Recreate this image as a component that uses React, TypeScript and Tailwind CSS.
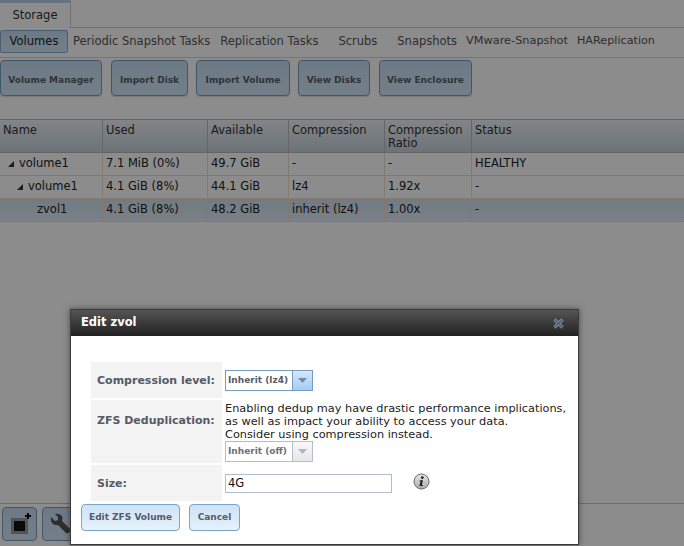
import React from "react";

const font = { fontFamily: '"DejaVu Sans", sans-serif' };

function ActionButton({ label, w, ml }: { label: string; w: string; ml: string }) {
  return (
    <div className={`h-[36px] ${w} ${ml} flex items-center justify-center rounded-[4px] border border-[#769dc0] bg-gradient-to-b from-[#c6def3] to-[#d2e6f8] pt-[5px] text-[9px] font-bold text-[#565f69] shadow-[0_1px_1px_rgba(0,0,0,0.15)]`}>
      {label}
    </div>
  );
}

const cols = ["w-[103px]", "w-[105px]", "w-[81px]", "w-[96px]", "w-[87px]", "flex-1"];

function Row({ cells, selected }: { cells: React.ReactNode[]; selected?: boolean }) {
  return (
    <div className={`flex h-[23px] border-b border-[#f1dcc8] ${selected ? "bg-gradient-to-b from-[#cfe0ef] to-[#dfeaf4]" : "bg-white"}`}>
      {cells.map((c, i) => (
        <div key={i} className={`${cols[i]} flex items-center border-r border-[#f1dcc8] pl-[3px] text-[11.5px] text-[#222] last:border-r-0`}>
          {c}
        </div>
      ))}
    </div>
  );
}

function Tri() {
  return (
    <svg width="6" height="6" viewBox="0 0 6 6" className="mr-[5px] shrink-0">
      <path d="M6 0V6H0Z" fill="#333" />
    </svg>
  );
}

function FormLabel({ children, className }: { children: React.ReactNode; className: string }) {
  return (
    <div className={`${className} w-[131px] shrink-0 flex bg-[#f3f3f3] pl-[6px] text-[11px] font-bold text-[#555a66]`}>
      {children}
    </div>
  );
}

function SelectBox({ label, active }: { label: string; active?: boolean }) {
  const border = active ? "border-[#769dc0]" : "border-[#b3bccb]";
  return (
    <div className={`flex h-[21px] w-[88px] border bg-white ${border}`}>
      <div className={`flex w-[66px] items-center whitespace-nowrap pl-[2px] text-[9px] font-bold ${active ? "text-[#555a66]" : "text-[#6a6f7a]"}`}>{label}</div>
      <div className={`flex flex-1 items-center justify-center border-l ${border} ${active ? "bg-gradient-to-b from-[#d5e7f8] to-[#a4ccf4]" : "bg-gradient-to-b from-[#f8f8f8] to-[#e6e6e6]"}`}>
        <svg width="9" height="5" viewBox="0 0 9 5"><path d="M0 0H9L4.5 5Z" fill={active ? "#6e8aa8" : "#a9b6c8"} /></svg>
      </div>
    </div>
  );
}

function FooterBtn({ children }: { children: React.ReactNode }) {
  return (
    <div className="flex h-[34px] w-[35px] items-center justify-center rounded-[4px] border border-[#769dc0] bg-gradient-to-b from-[#c6def3] to-[#d2e6f8]">
      {children}
    </div>
  );
}

export default function App() {
  return (
    <div className="relative h-[546px] w-[684px] overflow-hidden bg-white" style={font}>
      {/* Top tab */}
      <div className="flex h-[28px] border-b border-[#cfcfcf]">
        <div className="flex h-[28px] w-[71px] items-center justify-center border-r border-t-[3px] border-r-[#cfcfcf] border-t-[#b9d3ea] bg-white pt-[1px] text-[11.5px] text-[#333]">
          Storage
        </div>
      </div>

      {/* Sub tabs */}
      <div className="flex h-[30px] items-start border-b border-[#d6d6d6] pt-[2px] text-[11.5px] text-[#555]">
        <div className="flex h-[23px] w-[68px] items-center justify-center rounded-[2px] border border-[#86abcd] bg-gradient-to-b from-[#c6def3] to-[#d2e6f8] text-[#222]">
          Volumes
        </div>
        <div className="flex h-[23px] items-center">
          <span className="ml-[5px]">Periodic Snapshot Tasks</span>
          <span className="ml-[10px]">Replication Tasks</span>
          <span className="ml-[20px]">Scrubs</span>
          <span className="ml-[20px]">Snapshots</span>
          <span className="ml-[9px] text-[11.3px]">VMware-Snapshot</span>
          <span className="ml-[9px] text-[11.2px]">HAReplication</span>
        </div>
      </div>

      {/* Actions */}
      <div className="flex pt-[2px]">
        <ActionButton label="Volume Manager" w="w-[102px]" ml="ml-0" />
        <ActionButton label="Import Disk" w="w-[77px]" ml="ml-[9px]" />
        <ActionButton label="Import Volume" w="w-[94px]" ml="ml-[8px]" />
        <ActionButton label="View Disks" w="w-[72px]" ml="ml-[8px]" />
        <ActionButton label="View Enclosure" w="w-[93px]" ml="ml-[9px]" />
      </div>

      {/* Table */}
      <div className="mt-[23px]">
        <div className="flex h-[34px] border-y border-[#b5b5b5] bg-gradient-to-b from-[#eef3f7] to-[#c6d2dc] text-[11.5px] leading-[13px] text-[#333]">
          {["Name", "Used", "Available", "Compression", "Compression Ratio", "Status"].map((h, i) => (
            <div key={h} className={`${cols[i]} border-r border-[#b5bcc4] pl-[3px] pt-[4px] last:border-r-0`}>
              {h}
            </div>
          ))}
        </div>
        <Row cells={[<span className="flex items-center pl-[5px]"><Tri />volume1</span>, "7.1 MiB (0%)", "49.7 GiB", "-", "-", "HEALTHY"]} />
        <Row cells={[<span className="flex items-center pl-[14px]"><Tri />volume1</span>, "4.1 GiB (8%)", "44.1 GiB", "lz4", "1.92x", "-"]} />
        <Row selected cells={[<span className="pl-[34px]">zvol1</span>, "4.1 GiB (8%)", "48.2 GiB", "inherit (lz4)", "1.00x", "-"]} />
      </div>

      {/* Footer */}
      <div className="absolute bottom-0 left-0 right-0 flex h-[43px] gap-[5px] border-t border-[#c4c4c4] pl-[2px] pt-[3px]">
        <FooterBtn>
          <svg width="24" height="24" viewBox="0 0 24 24">
            <rect x="3" y="6" width="17" height="16" fill="#9a9a9a" />
            <rect x="6" y="9" width="11" height="10" fill="#111" />
            <path d="M19 1h2v2h2v2h-2v2h-2V5h-2V3h2Z" fill="#111" />
          </svg>
        </FooterBtn>
        <FooterBtn>
          <svg width="22" height="22" viewBox="0 0 22 22">
            <path d="M2 4l4 4 3-1 0-3-3-3c5-1 9 2 7 7l8 8c1 3-2 5-4 4L9 12C4 13 1 9 2 4Z" fill="#555" />
          </svg>
        </FooterBtn>
      </div>

      {/* Underlay */}
      <div className="absolute inset-0 bg-black/45" />

      {/* Dialog */}
      <div className="absolute left-[70px] top-[309px] h-[236px] w-[509px] border border-[#3a3a3a] bg-white shadow-[0_0_6px_rgba(0,0,0,0.5)]">
        <div className="flex h-[26px] items-center justify-between bg-gradient-to-b from-[#555] to-[#222] pl-[10px] pr-[14px] text-[11.5px] font-bold text-white">
          <span>Edit zvol</span>
          <svg width="11" height="11" viewBox="0 0 11 11">
            <path d="M1.5 1.5L9.5 9.5M9.5 1.5L1.5 9.5" stroke="#8a8f96" strokeWidth="3.2" />
            <path d="M1.5 1.5L9.5 9.5M9.5 1.5L1.5 9.5" stroke="#4a6076" strokeWidth="1.6" />
          </svg>
        </div>

        <div className="ml-[20px] mt-[26px] flex flex-col gap-[2px]">
          <div className="flex">
            <FormLabel className="h-[36px] items-center pt-[3px]">Compression level:</FormLabel>
            <div className="ml-[3px] flex items-center pt-[1px]">
              <SelectBox label="Inherit (lz4)" active />
            </div>
          </div>

          <div className="flex">
            <FormLabel className="h-[63px] items-start pt-[13px]">ZFS Deduplication:</FormLabel>
            <div className="ml-[3px] flex flex-col pt-[2px]">
              <div className="whitespace-nowrap text-[11.3px] leading-[13px] text-[#222]">
                Enabling dedup may have drastic performance implications,
                <br />
                as well as impact your ability to access your data.
                <br />
                Consider using compression instead.
              </div>
              <div>
                <SelectBox label="Inherit (off)" />
              </div>
            </div>
          </div>

          <div className="flex">
            <FormLabel className="h-[36px] items-center pt-[3px]">Size:</FormLabel>
            <div className="ml-[3px] flex h-[36px] items-center pt-[1px]">
              <div className="flex h-[19px] w-[167px] items-center border border-[#b3bccb] bg-white pl-[2px] text-[11.5px] text-[#111]">4G</div>
              <svg width="17" height="17" viewBox="0 0 17 17" className="ml-[21px] -mt-[5px]">
                <defs>
                  <linearGradient id="g" x1="0" y1="0" x2="0" y2="1">
                    <stop offset="0" stopColor="#e8e8e8" />
                    <stop offset="1" stopColor="#a9a9a9" />
                  </linearGradient>
                </defs>
                <circle cx="8.5" cy="8.5" r="7.5" fill="url(#g)" stroke="#666" />
                <circle cx="9.3" cy="4.6" r="1.4" fill="#222" />
                <path d="M6.8 7.2H10L8.8 12H10V13H6.4L7.5 8.2H6.6Z" fill="#222" />
              </svg>
            </div>
          </div>
        </div>

        <div className="ml-[10px] mt-[3px] flex gap-[9px]">
          <div className="flex h-[27px] w-[99px] items-center justify-center rounded-[4px] border border-[#7ca3c8] bg-gradient-to-b from-[#cde2f6] to-[#e6f2fc] text-[9px] font-bold text-[#555a66]">Edit ZFS Volume</div>
          <div className="flex h-[27px] w-[51px] items-center justify-center rounded-[4px] border border-[#7ca3c8] bg-gradient-to-b from-[#cde2f6] to-[#e6f2fc] text-[9px] font-bold text-[#555a66]">Cancel</div>
        </div>
      </div>
    </div>
  );
}
